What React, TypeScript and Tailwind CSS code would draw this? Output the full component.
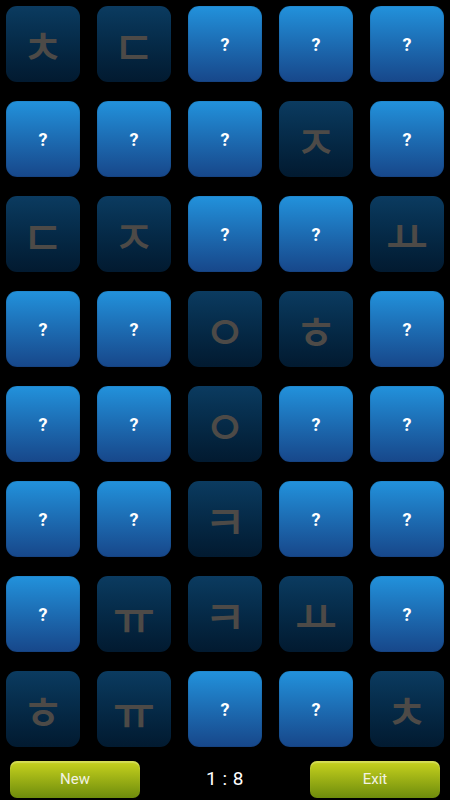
import React from 'react';

// null = hidden card, string = revealed letter
const board: (string | null)[][] = [
  ['ㅊ', 'ㄷ', null, null, null],
  [null, null, null, 'ㅈ', null],
  ['ㄷ', 'ㅈ', null, null, 'ㅛ'],
  [null, null, 'ㅇ', 'ㅎ', null],
  [null, null, 'ㅇ', null, null],
  [null, null, 'ㅋ', null, null],
  [null, 'ㅠ', 'ㅋ', 'ㅛ', null],
  ['ㅎ', 'ㅠ', null, null, 'ㅊ'],
];

const Tile: React.FC<{ letter: string | null }> = ({ letter }) => {
  if (letter === null) {
    return (
      <div className="h-[76px] w-[74px] rounded-[11px] bg-gradient-to-b from-[#2292dc] to-[#17478a] shadow-[inset_0_0_1px_rgba(0,0,0,0.6)] flex items-center justify-center">
        <span className="text-white font-bold text-[18px] font-['Roboto',sans-serif]">?</span>
      </div>
    );
  }
  return (
    <div className="h-[76px] w-[74px] rounded-[11px] bg-gradient-to-b from-[#0b3b60] to-[#021a30] flex items-center justify-center">
      <span className="text-[#4d4a47] text-[46px] font-medium font-['Noto_Sans_CJK_KR',sans-serif] leading-none">{letter}</span>
    </div>
  );
};

const App: React.FC = () => {
  return (
    <div className="w-[450px] h-[800px] bg-black flex flex-col overflow-hidden">
      <div className="grid grid-cols-[repeat(5,74px)] gap-x-[17px] gap-y-[19px] pl-[6px] pt-[6px]">
        {board.flat().map((letter, i) => (
          <Tile key={i} letter={letter} />
        ))}
      </div>

      <div className="flex items-center justify-between pl-[10px] pr-[10px] mt-[14px]">
        <button className="h-[37px] w-[130px] rounded-[7px] bg-gradient-to-b from-[#c9d41e] to-[#6e8c0c] text-[#f2f2e4] text-[15px] font-['Roboto',sans-serif] shadow-[inset_0_2px_1px_rgba(255,255,255,0.25)]">
          New
        </button>
        <span className="text-white text-[19px] font-['Roboto',sans-serif] tracking-wide">1 : 8</span>
        <button className="h-[37px] w-[130px] rounded-[7px] bg-gradient-to-b from-[#c9d41e] to-[#6e8c0c] text-[#f2f2e4] text-[15px] font-['Roboto',sans-serif] shadow-[inset_0_2px_1px_rgba(255,255,255,0.25)]">
          Exit
        </button>
      </div>
    </div>
  );
};

export default App;
